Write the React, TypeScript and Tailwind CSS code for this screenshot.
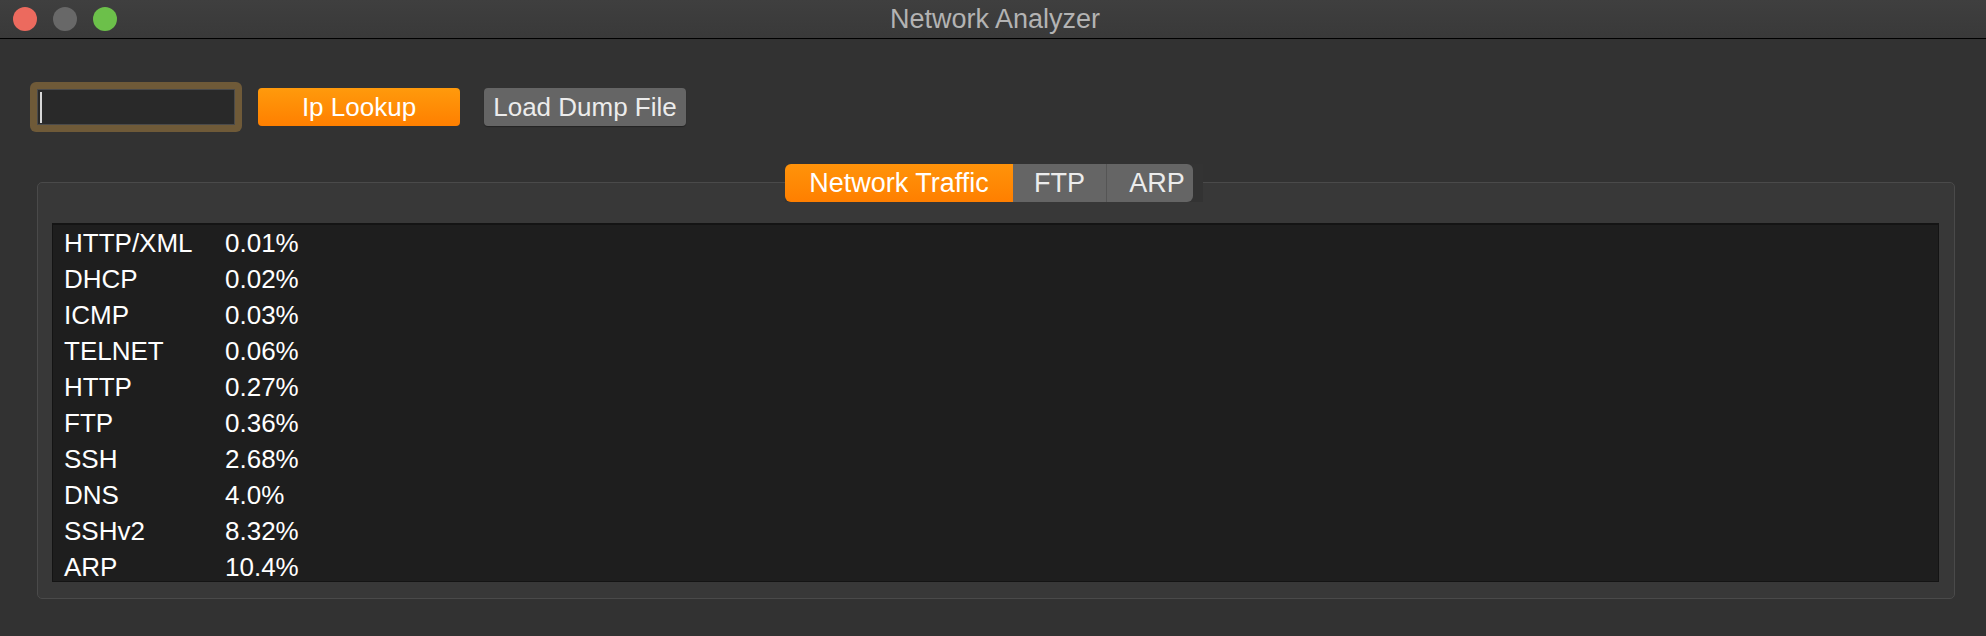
import React from 'react';

const rows: [string, string][] = [
  ['HTTP/XML', '0.01%'],
  ['DHCP', '0.02%'],
  ['ICMP', '0.03%'],
  ['TELNET', '0.06%'],
  ['HTTP', '0.27%'],
  ['FTP', '0.36%'],
  ['SSH', '2.68%'],
  ['DNS', '4.0%'],
  ['SSHv2', '8.32%'],
  ['ARP', '10.4%'],
];

export default function App() {
  return (
    <div className="w-[1986px] h-[636px] bg-[#323232] flex flex-col overflow-hidden font-['Liberation_Sans',Arial,sans-serif]">
      {/* Title bar */}
      <div className="relative h-[39px] shrink-0 bg-gradient-to-b from-[#3f3f3f] to-[#393939] border-b border-black flex items-center">
        <div className="flex items-center gap-[16px] pl-[13px]">
          <span className="w-[24px] h-[24px] rounded-full bg-[#ec6a5e]" />
          <span className="w-[24px] h-[24px] rounded-full bg-[#686868]" />
          <span className="w-[24px] h-[24px] rounded-full bg-[#6cc04a]" />
        </div>
        <div className="absolute inset-0 flex items-center justify-center pl-[4px] text-[27px] text-[#b3b3b3]">
          Network Analyzer
        </div>
      </div>

      {/* Toolbar */}
      <div className="flex items-center pl-[30px] pt-[43px]">
        <div className="w-[212px] h-[50px] rounded-[6px] bg-[#6f5a38] p-[7px]">
          <div className="w-full h-full bg-[#292929] border border-[#4a4a4a] flex items-center pl-[2px]">
            <span className="w-[2px] h-[31px] bg-[#d8d8d8]" />
          </div>
        </div>
        <button className="ml-[16px] w-[202px] h-[38px] rounded-[4px] bg-gradient-to-b from-[#ff9a0c] to-[#ff7f00] text-white text-[26px] flex items-center justify-center">
          Ip Lookup
        </button>
        <button className="ml-[24px] w-[202px] h-[38px] rounded-[4px] bg-[#656565] text-[#ececec] text-[26px] flex items-center justify-center whitespace-nowrap shadow-[0_1px_1px_rgba(0,0,0,0.3)]">
          Load Dump File
        </button>
      </div>

      {/* Tab group */}
      <div className="pl-[37px] pt-[32px]">
        <div className="w-[1918px] flex justify-center pr-[4px] relative z-10">
          <div className="flex pr-[10px] bg-[#333333]">
            <div className="w-[228px] h-[38px] rounded-l-[6px] bg-gradient-to-b from-[#ff930a] to-[#ff7f00] text-white text-[27px] flex items-center justify-center">
              Network Traffic
            </div>
            <div className="w-[94px] h-[38px] bg-[#656565] border-r border-[#555555] text-[#ececec] text-[27px] flex items-center justify-center">
              FTP
            </div>
            <div className="w-[86px] h-[38px] rounded-r-[6px] bg-[#656565] text-[#ececec] text-[27px] flex items-center justify-center pl-[14px]">
              ARP
            </div>
          </div>
        </div>
        <div className="-mt-[20px] w-[1918px] h-[417px] rounded-[5px] border border-[#4a4a4a] bg-[#383838] pt-[40px] pl-[14px] pr-[15px] pb-[16px]">
          <div className="w-full h-full bg-[#1e1e1e] border border-[#141414] border-t-2 overflow-hidden">
            {rows.map(([name, pct]) => (
              <div key={name} className="grid grid-cols-[161px_1fr] h-[36px] items-center pl-[11px] text-[26px] leading-[36px] text-white">
                <span>{name}</span>
                <span>{pct}</span>
              </div>
            ))}
          </div>
        </div>
      </div>
    </div>
  );
}
